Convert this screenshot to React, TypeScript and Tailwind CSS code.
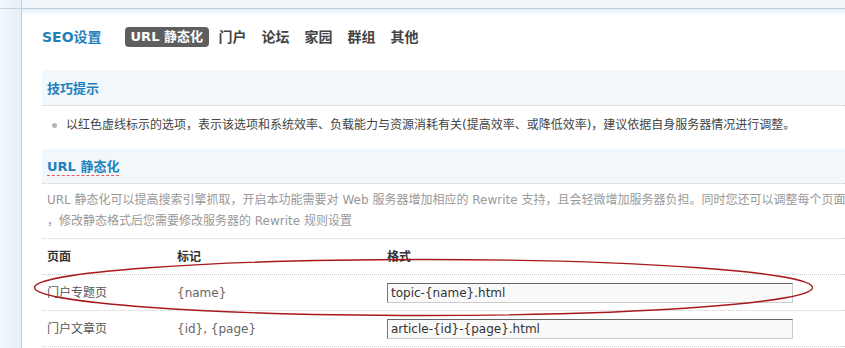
import React from "react";

const font = { fontFamily: '"DejaVu Sans", "Noto Sans CJK SC", sans-serif' };

export default function App() {
  const tabs = ["门户", "论坛", "家园", "群组", "其他"];
  return (
    <div
      className="relative flex h-[348px] w-[845px] overflow-hidden bg-white text-[12px] text-[#333]"
      style={font}
    >
      {/* left strip */}
      <div className="flex w-[22px] shrink-0 flex-col border-r border-[#BCD0DF] bg-gradient-to-r from-[#F3F8FC] to-[#E6EFF7]">
        <div className="h-[9px] border-b border-[#C3D5E3]" />
      </div>

      {/* main */}
      <div className="flex min-w-0 flex-1 flex-col">
        <div className="h-[9px] shrink-0 overflow-hidden border-b border-[#B7CDDC] bg-[#F0F5FA]">
          <div className="mt-[-11px] pl-[105px] text-[12px] leading-[12px] text-[#666]">门户</div>
        </div>
        <div className="h-0 shrink-0">
          <div className="h-[7px] bg-gradient-to-b from-[#E4EDF5] to-white" />
        </div>

        <div className="flex flex-col pl-[20px]">
          {/* title + tabs */}
          <div className="mt-[18px] flex h-[20px] items-center">
            <span className="text-[14px] font-bold text-[#1F80BC]">SEO设置</span>
            <span className="ml-[23px] flex h-[20px] items-center rounded-[4px] bg-[#5E5E5E] px-[6px] text-[13px] font-bold text-white">
              URL 静态化
            </span>
            <div className="ml-[2px] flex">
              {tabs.map((t) => (
                <span key={t} className="w-[43px] text-center text-[14px] font-bold text-[#444]">
                  {t}
                </span>
              ))}
            </div>
          </div>

          {/* section 1 */}
          <div className="mt-[23px] flex h-[36px] items-center border-b border-dotted border-[#CCCCCC] bg-[#F2F7FC] pl-[5px] pt-[2px]">
            <span className="text-[13px] font-bold text-[#1F80BC]">技巧提示</span>
          </div>
          <div className="flex h-[43px] items-start pl-[10px] pt-[11px]">
            <span className="mt-[6px] h-[5px] w-[5px] shrink-0 rounded-full bg-[#B5B5B5]" />
            <span className="ml-[9px] whitespace-nowrap leading-[16px] text-[#444]">
              以红色虚线标示的选项，表示该选项和系统效率、负载能力与资源消耗有关(提高效率、或降低效率)，建议依据自身服务器情况进行调整。
            </span>
          </div>

          {/* section 2 */}
          <div className="flex h-[35px] items-center border-b border-dotted border-[#CCCCCC] bg-[#F2F7FC] pl-[5px] pt-[2px]">
            <span className="border-b border-dashed border-[#E06060] text-[13px] font-bold leading-[16px] text-[#1F80BC]">
              URL 静态化
            </span>
          </div>
          <div className="flex flex-col border-b border-dotted border-[#CCCCCC] pb-[6px] pl-[5px] pt-[6px] leading-[21px] text-[#999]">
            <span className="whitespace-nowrap">
              URL 静态化可以提高搜索引擎抓取，开启本功能需要对 Web 服务器增加相应的 Rewrite 支持，且会轻微增加服务器负担。同时您还可以调整每个页面
            </span>
            <span className="whitespace-nowrap">，修改静态格式后您需要修改服务器的 Rewrite 规则设置</span>
          </div>

          {/* table */}
          <div className="flex h-[36px] items-center border-b border-dotted border-[#CCCCCC] pl-[5px] font-bold text-[#333]">
            <span className="w-[130px]">页面</span>
            <span className="w-[210px]">标记</span>
            <span>格式</span>
          </div>
          {[
            ["门户专题页", "{name}", "topic-{name}.html"],
            ["门户文章页", "{id}, {page}", "article-{id}-{page}.html"],
          ].map(([a, b, c]) => (
            <div
              key={a}
              className="flex h-[36px] items-center border-b border-dotted border-[#CCCCCC] pl-[5px] text-[#555]"
            >
              <span className="w-[130px]">{a}</span>
              <span className="w-[210px] text-[#666]">{b}</span>
              <div className="flex h-[20px] w-[406px] items-center border border-b-[#CCCCCC] border-l-[#777] border-r-[#CCCCCC] border-t-[#666] bg-[#F9F9F9] pl-[3px] text-[#333]">
                {c}
              </div>
            </div>
          ))}
        </div>
      </div>

      {/* red ellipse annotation */}
      <svg className="pointer-events-none absolute left-0 top-0" width="845" height="348">
        <ellipse cx="423.5" cy="287.5" rx="389" ry="28" fill="none" stroke="#A8191C" strokeWidth="1.4" />
      </svg>
    </div>
  );
}
